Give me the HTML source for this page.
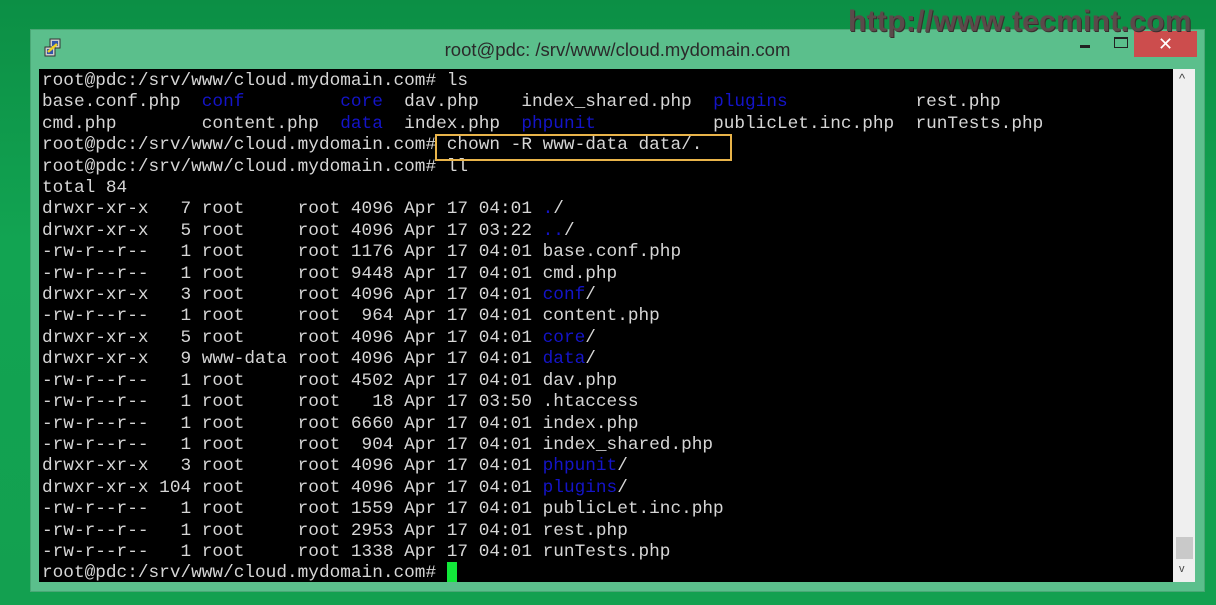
<!DOCTYPE html>
<html><head><meta charset="utf-8"><style>
html,body{margin:0;padding:0;width:1216px;height:605px;overflow:hidden;background:linear-gradient(180deg,#0c8f45 0%,#12a452 40%,#13a050 100%);font-family:"Liberation Sans",sans-serif;position:relative}
.wm{position:absolute;z-index:5;left:848px;top:5px;font:bold 30px/34px "Liberation Sans",sans-serif;color:#5b4a4a;letter-spacing:0.3px;text-shadow:1px 1px 0 #3a2e2e}
.win{position:absolute;left:30px;top:29px;width:1175px;height:563px;background:#5bbf8c;border:1px solid #4aa876;box-sizing:border-box}
.title{position:absolute;left:0;right:0;top:9px;text-align:center;font-size:18.5px;color:#2a2a2a}
.close{position:absolute;left:1103px;top:1px;width:63px;height:26px;background:#cc4d4d;color:#fff;font-size:18px;text-align:center;line-height:26px}
.min{position:absolute;left:1049px;top:15px;width:10px;height:3px;background:#222}
.max{position:absolute;left:1083px;top:7px;width:12px;height:8px;border:1px solid #222;border-top-width:2px}
.term{position:absolute;left:39px;top:69px;width:1134px;height:513px;background:#000}
.sb{position:absolute;left:1173px;top:69px;width:22px;height:513px;background:#efefef}
.thumb{position:absolute;left:3px;top:468px;width:17px;height:22px;background:#c9c9c9}
pre{position:absolute;left:42px;top:71px;margin:0;font:17.75px/21.4px "Liberation Mono",monospace;color:#d6d6d6}
.b{color:#1414c8}
.box{position:absolute;left:435px;top:134px;width:297px;height:27px;border:2px solid #e9b44a;box-sizing:border-box}
.cur{position:absolute;left:447px;top:562px;width:10px;height:20px;background:#12e83a}
.icon{position:absolute;left:12px;top:8px;width:20px;height:20px}
</style></head><body>
<div class="wm">http://www.tecmint.com</div>
<div class="win">
<svg class="icon" viewBox="0 0 20 20"><rect x="7" y="1" width="10" height="9" fill="#ccc" stroke="#333"/><rect x="9" y="3" width="6" height="5" fill="#3355aa"/><rect x="2" y="9" width="10" height="9" fill="#ccc" stroke="#333"/><rect x="4" y="11" width="6" height="5" fill="#3355aa"/><path d="M5 14 L14 6" stroke="#f0d020" stroke-width="2.5"/></svg>
<div class="title">root@pdc: /srv/www/cloud.mydomain.com</div>
<div class="min"></div><div class="max"></div>
<div class="close">✕</div>
</div>
<div class="term"></div>
<div class="sb"><div style="position:absolute;left:6px;top:2px;font-size:13px;color:#444">^</div><div class="thumb"></div><div style="position:absolute;left:6px;top:494px;font-size:11px;color:#444">v</div></div>
<pre>root@pdc:/srv/www/cloud.mydomain.com# ls
base.conf.php  <span class="b">conf</span>         <span class="b">core</span>  dav.php    index_shared.php  <span class="b">plugins</span>            rest.php
cmd.php        content.php  <span class="b">data</span>  index.php  <span class="b">phpunit</span>           publicLet.inc.php  runTests.php
root@pdc:/srv/www/cloud.mydomain.com# chown -R www-data data/.
root@pdc:/srv/www/cloud.mydomain.com# ll
total 84
drwxr-xr-x   7 root     root 4096 Apr 17 04:01 <span class="b">.</span>/
drwxr-xr-x   5 root     root 4096 Apr 17 03:22 <span class="b">..</span>/
-rw-r--r--   1 root     root 1176 Apr 17 04:01 base.conf.php
-rw-r--r--   1 root     root 9448 Apr 17 04:01 cmd.php
drwxr-xr-x   3 root     root 4096 Apr 17 04:01 <span class="b">conf</span>/
-rw-r--r--   1 root     root  964 Apr 17 04:01 content.php
drwxr-xr-x   5 root     root 4096 Apr 17 04:01 <span class="b">core</span>/
drwxr-xr-x   9 www-data root 4096 Apr 17 04:01 <span class="b">data</span>/
-rw-r--r--   1 root     root 4502 Apr 17 04:01 dav.php
-rw-r--r--   1 root     root   18 Apr 17 03:50 .htaccess
-rw-r--r--   1 root     root 6660 Apr 17 04:01 index.php
-rw-r--r--   1 root     root  904 Apr 17 04:01 index_shared.php
drwxr-xr-x   3 root     root 4096 Apr 17 04:01 <span class="b">phpunit</span>/
drwxr-xr-x 104 root     root 4096 Apr 17 04:01 <span class="b">plugins</span>/
-rw-r--r--   1 root     root 1559 Apr 17 04:01 publicLet.inc.php
-rw-r--r--   1 root     root 2953 Apr 17 04:01 rest.php
-rw-r--r--   1 root     root 1338 Apr 17 04:01 runTests.php
root@pdc:/srv/www/cloud.mydomain.com# </pre>
<div class="box"></div>
<div class="cur"></div>
</body></html>
